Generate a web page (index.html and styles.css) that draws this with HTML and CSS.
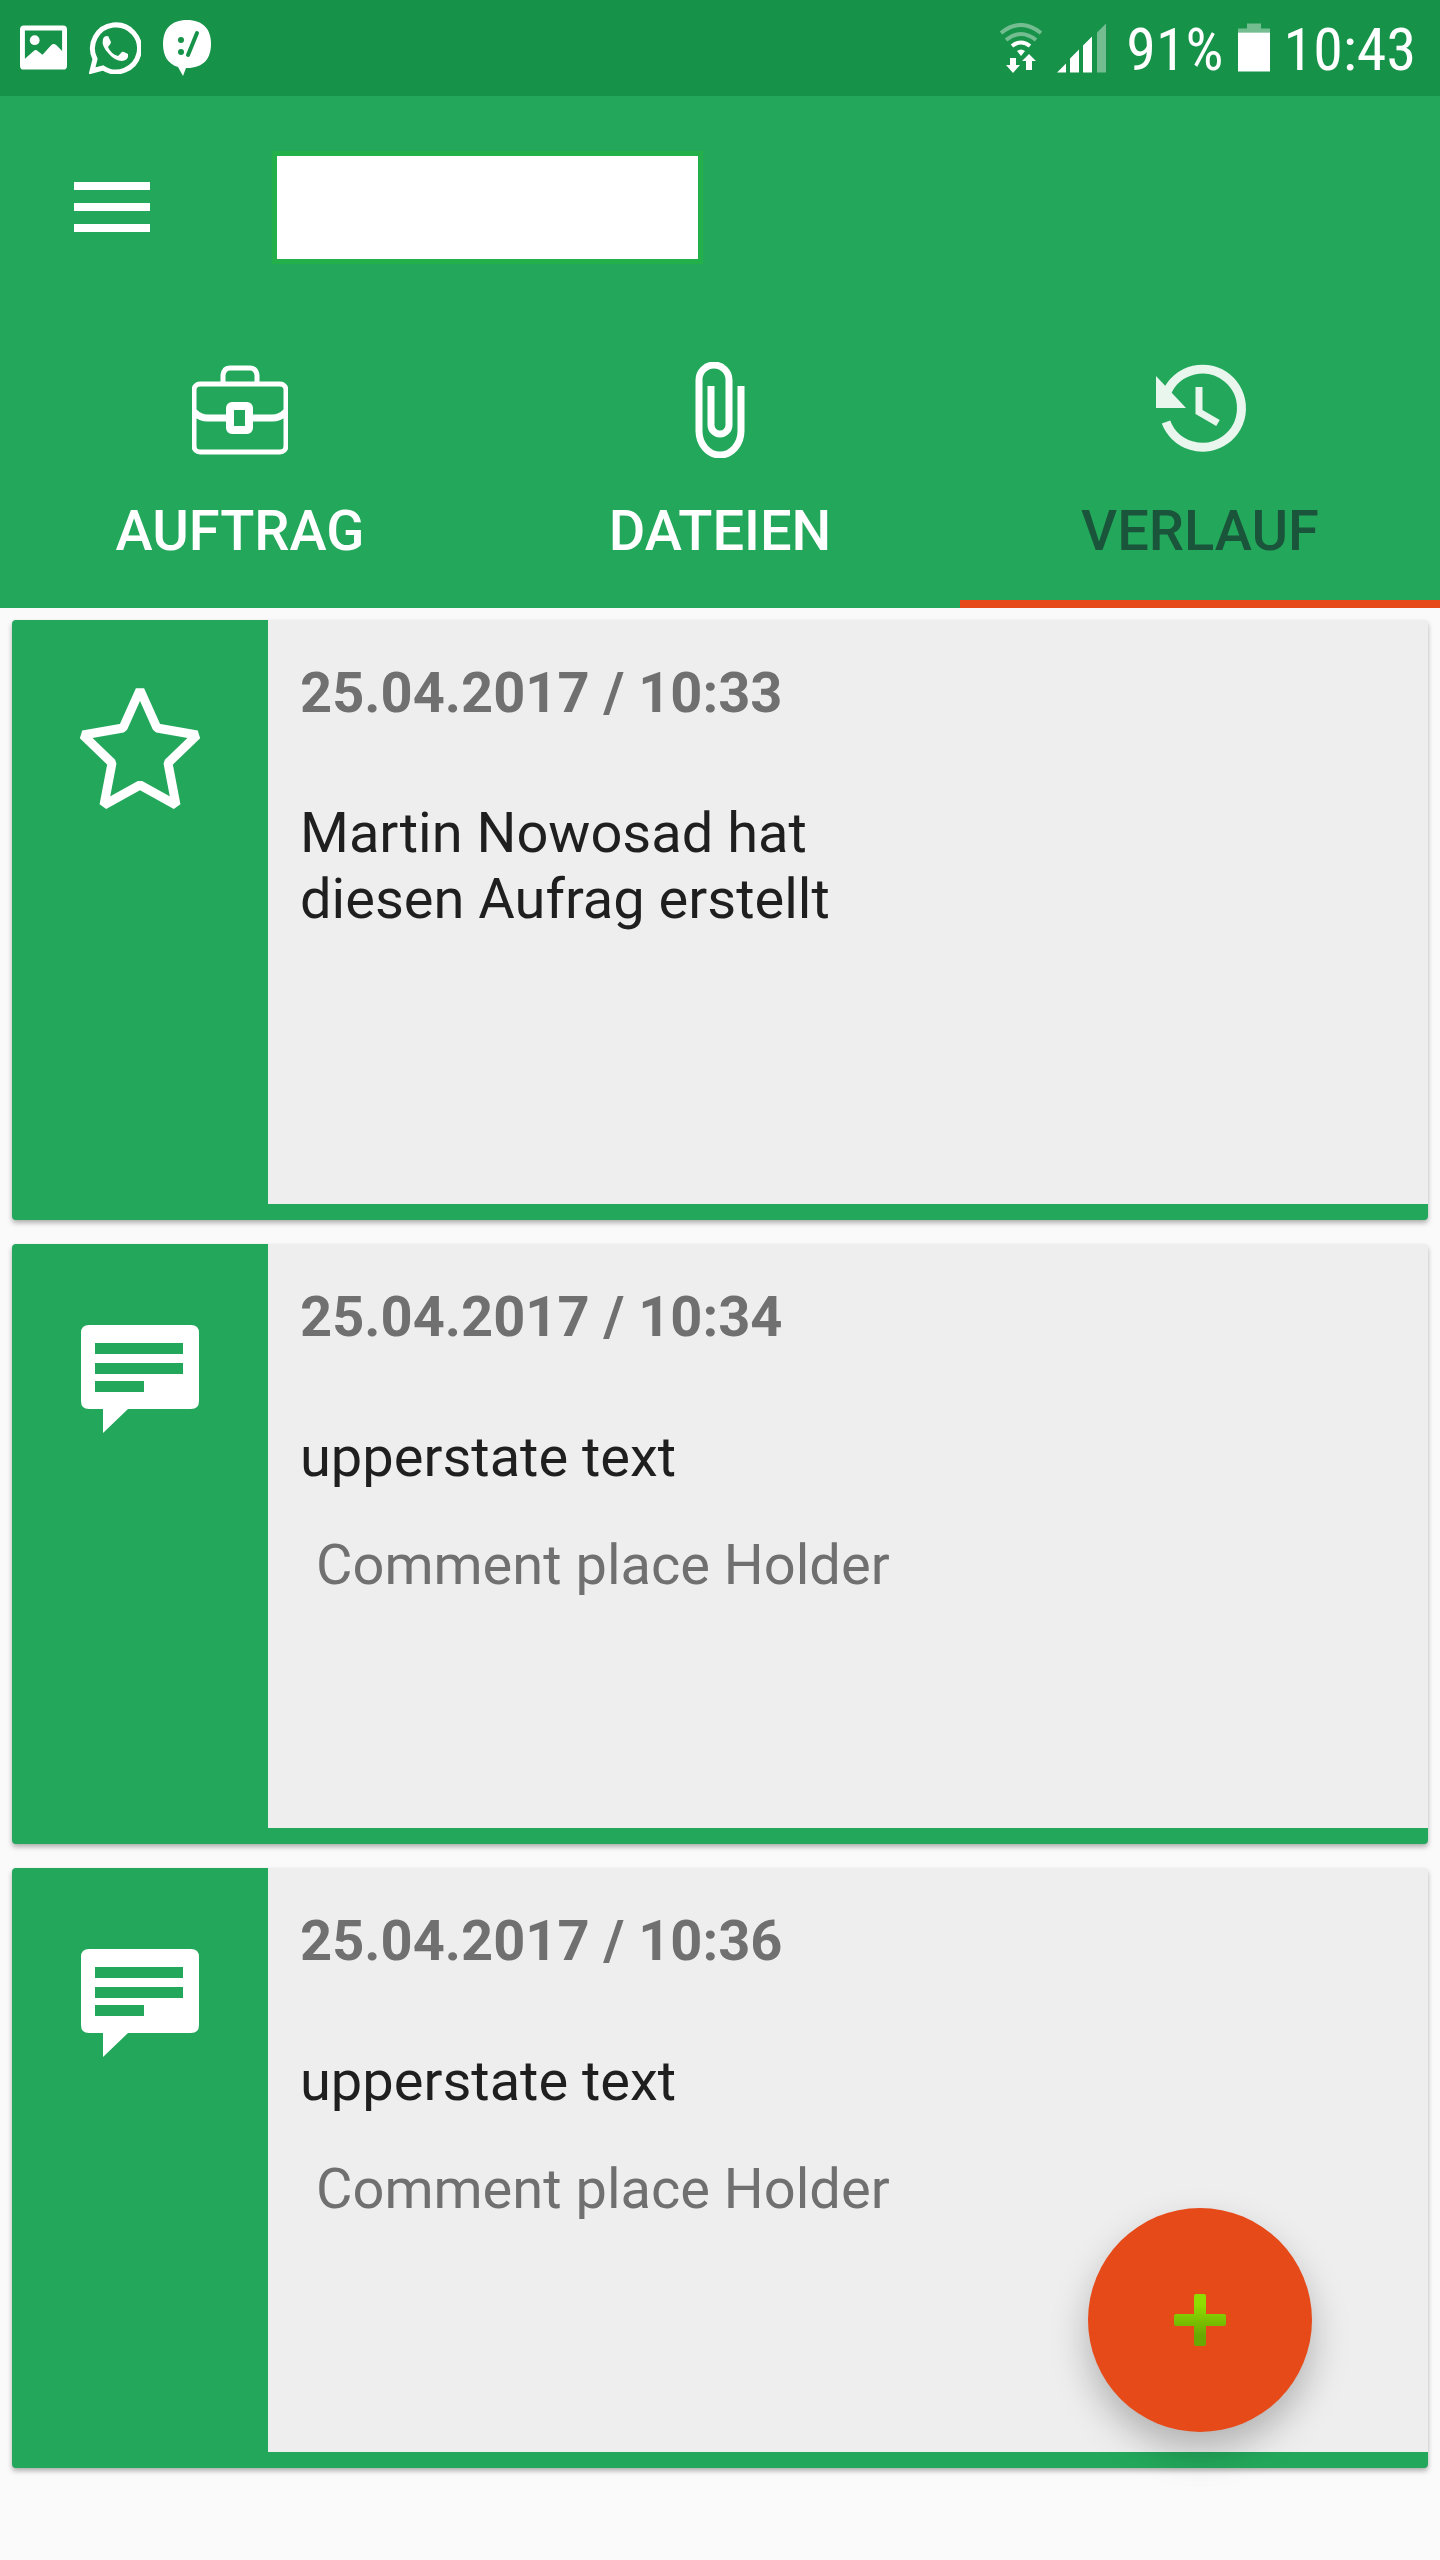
FILE: index.html
```html
<!DOCTYPE html>
<html lang="de">
<head>
<meta charset="utf-8">
<meta name="viewport" content="width=device-width, initial-scale=1">
<title>Verlauf</title>
<link rel="stylesheet" href="styles.css">
</head>
<body>
<div class="statusbar">
  <div class="status-group">
    <svg class="status-icon picture-icon" viewBox="0 0 48 46" aria-hidden="true">
      <path fill="#fff" fill-rule="evenodd" d="M4 0H44Q48 0 48 4V41Q48 45 44 45H4Q0 45 0 41V4Q0 0 4 0ZM5 5V34L14 26Q16 24 18 26L23 30L32 20Q34 18 37 20L43 26V5Z"/>
      <circle cx="15" cy="15" r="5" fill="#fff"/>
    </svg>
    <svg class="status-icon chat-icon" viewBox="0 0 52 52" aria-hidden="true">
      <path fill="none" stroke="#fff" stroke-width="5" d="M3 49L6 37A23.500 23.500 0 1 1 14 46Z"/>
      <path fill="#fff" d="M14 17Q15 14 18 14Q20 14 20 16L22 20Q22 22 19 25Q22 32 29 34L32 31Q33 29 35 30L39 32Q40 38 33 39Q26 39 20 32Q12 24 14 17Z"/>
    </svg>
    <svg class="status-icon bubble-icon" viewBox="0 0 48 56" aria-hidden="true">
      <path fill="#fff" d="M24 0C40 0 48 9 48 24C48 39 40 48 24 48H23L20 56L15 47C5 44 0 36 0 24C0 9 8 0 24 0Z"/>
      <g fill="#169249"><circle cx="18" cy="20" r="3"/><circle cx="18" cy="32" r="3"/></g>
      <path stroke="#169249" stroke-width="4" stroke-linecap="round" d="M34 13L25 35"/>
    </svg>
  </div>
  <div class="status-group status-right">
    <svg class="status-icon wifi-icon" viewBox="0 0 44 50" aria-hidden="true">
      <g fill="none" stroke="#fff" stroke-width="4">
        <path opacity=".4" d="M2 10Q22 -6 42 10M7 17Q22 5 37 17"/>
        <path d="M13 23Q22 16 31 23"/>
      </g>
      <path fill="#fff" d="M18 28Q22 25 26 28L22 33ZM11 35H17V42H21L14 50L7 42H11ZM27 47V38H23L30 31L37 38H33V47Z"/>
    </svg>
    <svg class="status-icon signal-icon" viewBox="0 0 49 49" aria-hidden="true">
      <path fill="#fff" d="M0 49L9 40V49ZM13 49V35L22 26V49ZM26 49V22L35 13V49Z"/>
      <path fill="#fff" opacity=".4" d="M40 49V9L49 0V49Z"/>
    </svg>
    <span class="status-text">91%</span>
    <svg class="status-icon battery-icon" viewBox="0 0 32 49" aria-hidden="true">
      <path fill="#fff" opacity=".4" d="M9 0H23V5H32V9H0V5H9Z"/>
      <path fill="#fff" d="M0 9H32V48H0Z"/>
    </svg>
    <span class="status-text">10:43</span>
  </div>
</div>

<header class="appbar">
  <div class="toolbar">
    <button class="menu-button" type="button" aria-label="Menü">
      <span class="menu-line"></span><span class="menu-line"></span><span class="menu-line"></span>
    </button>
    <div class="title-box"></div>
  </div>
  <nav class="tabs">
    <a class="tab" href="#auftrag">
      <svg class="tab-icon" viewBox="0 0 96 96" aria-hidden="true">
        <g fill="none" stroke="#fff" stroke-width="5">
          <rect x="2" y="22" width="92" height="68" rx="6"/>
          <path d="M31 21V13Q32 6 38 6H58Q64 6 65 13V21"/>
          <path stroke-width="7" d="M2 50Q8 56 16 56H35M60 56H80Q88 56 94 50"/>
          <rect x="38" y="44" width="19" height="24" rx="2" stroke-width="8"/>
        </g>
      </svg>
      <span>AUFTRAG</span>
    </a>
    <a class="tab" href="#dateien">
      <svg class="tab-icon" viewBox="0 0 96 96" aria-hidden="true">
        <path fill="none" stroke="#fff" stroke-width="7" d="M69 24V69A21 24 0 0 1 27 69V18A15 15 0 0 1 57 18V63A9 9 0 0 1 39 63V24"/>
      </svg>
      <span>DATEIEN</span>
    </a>
    <a class="tab tab-active" href="#verlauf" aria-current="page">
      <svg class="tab-icon" viewBox="0 0 96 96" aria-hidden="true">
        <g fill="none" stroke="#e8f6ee" stroke-width="9">
          <path d="M15 30A39 39 0 1 1 14 60"/>
          <path stroke-width="7" d="M47 25V50L66 61"/>
        </g>
        <path fill="#e8f6ee" d="M4 14L34 46H4Z"/>
      </svg>
      <span>VERLAUF</span>
    </a>
  </nav>
</header>

<main class="history">
  <article class="entry">
    <div class="entry-side">
      <svg class="entry-icon" viewBox="0 0 128 128" aria-hidden="true">
        <path fill="none" stroke="#fff" stroke-width="9" stroke-linejoin="bevel" d="M64 6L81 44L121 51L92 79L100 121L64 101L28 121L36 79L7 51L47 44Z"/>
      </svg>
    </div>
    <div class="entry-body">
      <time class="entry-time" datetime="2017-04-25T10:33">25.04.2017 / 10:33</time>
      <p class="entry-text">Martin Nowosad hat diesen Aufrag erstellt</p>
    </div>
  </article>
  <article class="entry">
    <div class="entry-side">
      <svg class="entry-icon" viewBox="0 0 128 128" aria-hidden="true">
        <path fill="#fff" fill-rule="evenodd" d="M13 17H115Q123 17 123 25V93Q123 101 115 101H52L27 125V101H13Q5 101 5 93V25Q5 17 13 17ZM19 35V46H107V35ZM19 55V66H107V55ZM19 73V84H68V73Z"/>
      </svg>
    </div>
    <div class="entry-body">
      <time class="entry-time" datetime="2017-04-25T10:34">25.04.2017 / 10:34</time>
      <p class="entry-text">upperstate text</p>
      <p class="entry-comment">Comment place Holder</p>
    </div>
  </article>
  <article class="entry">
    <div class="entry-side">
      <svg class="entry-icon" viewBox="0 0 128 128" aria-hidden="true">
        <path fill="#fff" fill-rule="evenodd" d="M13 17H115Q123 17 123 25V93Q123 101 115 101H52L27 125V101H13Q5 101 5 93V25Q5 17 13 17ZM19 35V46H107V35ZM19 55V66H107V55ZM19 73V84H68V73Z"/>
      </svg>
    </div>
    <div class="entry-body">
      <time class="entry-time" datetime="2017-04-25T10:36">25.04.2017 / 10:36</time>
      <p class="entry-text">upperstate text</p>
      <p class="entry-comment">Comment place Holder</p>
    </div>
  </article>
</main>

<button class="fab" type="button" aria-label="Hinzufügen">
  <svg class="fab-icon" viewBox="0 0 52 52" aria-hidden="true">
    <defs>
      <linearGradient id="plus" x1="0" y1="0" x2="0" y2="1">
        <stop offset=".2" stop-color="#8fdc00"/>
        <stop offset=".8" stop-color="#69a800"/>
      </linearGradient>
    </defs>
    <path fill="url(#plus)" d="M22 0H30Q32 0 32 2V20H50Q52 20 52 22V30Q52 32 50 32H32V50Q32 52 30 52H22Q20 52 20 50V32H2Q0 32 0 30V22Q0 20 2 20H20V2Q20 0 22 0Z"/>
  </svg>
</button>
</body>
</html>
```

FILE: styles.css
```css
* {
  box-sizing: border-box;
}

body {
  margin: 0;
  min-height: 100vh;
  background: #fafafa;
  color: #1f1f1f;
  font-family: Roboto, sans-serif;
  font-size: 56px;
  line-height: 66px;
}

p {
  margin: 0;
}

/* Status bar */
.statusbar {
  display: flex;
  justify-content: space-between;
  align-items: center;
  height: 96px;
  padding: 0 24px 0 20px;
  background: #169249;
  color: #fff;
}

.status-group {
  display: flex;
  align-items: center;
  gap: 22px;
}

.status-right {
  gap: 14px;
  font-family: "Roboto Condensed", Roboto, sans-serif;
  font-size: 60px;
}

.status-text {
  padding-top: 4px;
}

.status-icon {
  display: block;
  height: 50px;
}

.picture-icon { width: 47px; height: 46px; }
.chat-icon { width: 52px; height: 52px; }
.bubble-icon { width: 48px; height: 56px; }
.wifi-icon { width: 44px; }
.signal-icon { width: 49px; margin-right: 6px; }
.battery-icon { width: 32px; }

/* App bar */
.appbar {
  background: #23a85b;
}

.toolbar {
  display: flex;
  align-items: center;
  gap: 104px;
  height: 224px;
  padding: 0 56px 2px;
}

.menu-button {
  display: flex;
  flex-direction: column;
  justify-content: center;
  gap: 13px;
  width: 112px;
  height: 112px;
  padding: 0 18px;
  border: 0;
  background: none;
}

.menu-line {
  width: 76px;
  height: 8px;
  background: #fff;
}

.title-box {
  width: 431px;
  height: 113px;
  border: 5px solid #23b04b;
  background: #fff;
}

.tabs {
  display: grid;
  grid-template-columns: repeat(3, 1fr);
}

.tab {
  display: flex;
  flex-direction: column;
  align-items: center;
  gap: 40px;
  height: 288px;
  padding-top: 42px;
  border-bottom: 8px solid transparent;
  color: #fff;
  font-weight: 500;
  text-decoration: none;
}

.tab-active {
  border-color: #e64a19;
  color: #1a543a;
}

.tab-icon {
  width: 96px;
  height: 96px;
}

/* History list */
.history {
  display: flex;
  flex-direction: column;
  gap: 24px;
  padding: 12px 12px 92px;
}

.entry {
  display: flex;
  min-height: 600px;
  border-bottom: 16px solid #23a85b;
  border-radius: 4px;
  background: #eee;
  box-shadow: 0 3px 5px rgba(0, 0, 0, .3);
}

.entry-side {
  flex: none;
  width: 256px;
  padding: 64px;
  background: #23a85b;
  border-top-left-radius: 4px;
}

.entry-icon {
  display: block;
  width: 128px;
  height: 128px;
}

.entry-body {
  flex: 1;
  padding: 40px 32px;
}

.entry-time {
  display: block;
  color: #707070;
  font-weight: 700;
  font-kerning: none;
}

.entry-text {
  max-width: 600px;
  margin-top: 74px;
}

.entry-comment {
  margin-top: 42px;
  padding-left: 16px;
  color: #707070;
}

/* Floating action button */
.fab {
  position: fixed;
  right: 128px;
  bottom: 128px;
  display: flex;
  align-items: center;
  justify-content: center;
  width: 224px;
  height: 224px;
  padding: 0;
  border: 0;
  border-radius: 50%;
  background: #e64a19;
  box-shadow: 0 18px 36px rgba(0, 0, 0, .25);
}

.fab-icon {
  width: 52px;
  height: 52px;
}
```
